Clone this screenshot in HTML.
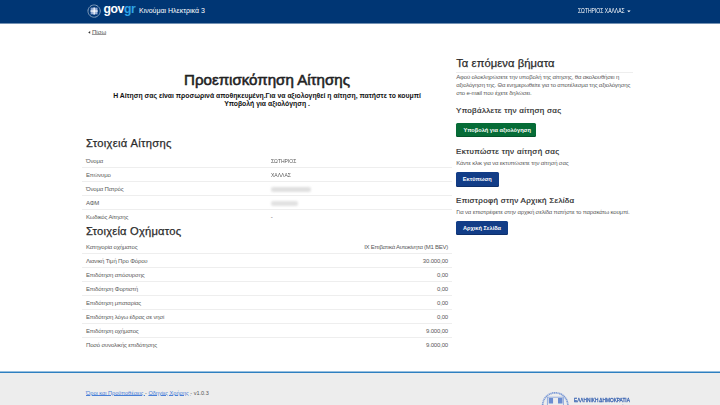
<!DOCTYPE html>
<html><head><meta charset="utf-8">
<style>
html,body{margin:0;padding:0;width:720px;height:405px;overflow:hidden;background:#fff;}
body{position:relative;font-family:"Liberation Sans",sans-serif;}
.a{position:absolute;white-space:nowrap;}
.ln{position:absolute;height:1px;background:#eeeeee;}
.btn{position:absolute;border-radius:1.5px;box-shadow:inset 0 -1px 0 rgba(0,0,0,0.22);}
</style></head><body>
<div style="position:absolute;left:0;top:0;width:720px;height:23px;background:#003674"></div>
<div style="position:absolute;left:0;top:23px;width:720px;height:1px;background:#003674;opacity:0.55"></div>
<svg class="a" style="left:84px;top:2px;width:20px;height:20px" viewBox="0 0 20 20">
  <circle cx="10.1" cy="9.1" r="6.1" fill="none" stroke="#fff" stroke-opacity="0.8" stroke-width="0.9" stroke-dasharray="0.9 0.35"/>
  <rect x="6.5" y="5.5" width="7.2" height="7.1" rx="0.4" fill="#6482b8"/>
  <rect x="7.2" y="6.2" width="2.4" height="2.3" fill="#9bb2d8"/><rect x="10.7" y="6.2" width="2.4" height="2.3" fill="#9bb2d8"/>
  <rect x="7.2" y="9.7" width="2.4" height="2.3" fill="#9bb2d8"/><rect x="10.7" y="9.7" width="2.4" height="2.3" fill="#9bb2d8"/>
  <rect x="9.5" y="5.5" width="1.3" height="7.1" fill="#fff"/>
  <rect x="6.5" y="8.4" width="7.2" height="1.3" fill="#fff"/>
</svg>
<div class="a" style="left:103.60px;top:1px;font-size:12.2px;line-height:16px;color:#fff;font-weight:700;letter-spacing:-0.45px;">gov<span style="color:#2fa3e6">gr</span></div>
<div class="a" style="left:139.00px;top:6px;font-size:7px;line-height:9px;color:#fff;">Κινούμαι Ηλεκτρικά 3</div>
<div class="a" style="left:577.60px;top:7px;font-size:6.3px;line-height:8px;color:#fff;transform:scaleX(0.8);transform-origin:0 0;">ΣΩΤΗΡΙΟΣ ΧΑΛΛΑΣ</div>
<svg class="a" style="left:626.8px;top:10px;width:4px;height:3px" viewBox="0 0 4 3"><path d="M0.2 0.4 L3.6 0.4 L1.9 2.2 Z" fill="#fff"/></svg>
<svg class="a" style="left:87.8px;top:30.6px;width:3px;height:3px" viewBox="0 0 3 3"><path d="M2.2 0 L2.2 2.8 L0.2 1.4 Z" fill="#333"/></svg>
<div class="a" style="left:91.90px;top:28px;font-size:6.1px;line-height:8px;color:#555;text-decoration:underline;text-decoration-color:#999;text-decoration-thickness:0.5px;text-underline-offset:0px;">Πίσω</div>
<div class="a" style="left:88.00px;top:70px;font-size:15.1px;line-height:19px;color:#222;text-align:center;width:358px;-webkit-text-stroke:0.55px #222;">Προεπισκόπηση Αίτησης</div>
<div class="a" style="left:88.00px;top:91px;font-size:6.85px;line-height:9px;color:#111;font-weight:700;text-align:center;width:358px;">Η Αίτηση σας είναι προσωρινά αποθηκευμένη.Για να αξιολογηθεί η αίτηση, πατήστε το κουμπί</div>
<div class="a" style="left:88.00px;top:99px;font-size:6.85px;line-height:9px;color:#111;font-weight:700;text-align:center;width:358px;">Υποβολή για αξιολόγηση .</div>
<div class="a" style="left:86.00px;top:136px;font-size:11.2px;line-height:14px;color:#2b2b2b;-webkit-text-stroke:0.25px #2b2b2b;letter-spacing:0.31px;">Στοιχειά Αίτησης</div>
<div class="a" style="left:86.00px;top:157px;font-size:6px;line-height:8px;color:#595959;letter-spacing:-0.17px;">Όνομα</div>
<div class="a" style="left:270.70px;top:157px;font-size:6px;line-height:8px;color:#595959;transform:scaleX(0.84);transform-origin:0 0;">ΣΩΤΗΡΙΟΣ</div>
<div class="ln" style="left:82px;top:167px;width:370px"></div>
<div class="a" style="left:86.00px;top:171px;font-size:6px;line-height:8px;color:#595959;letter-spacing:-0.17px;">Επώνυμο</div>
<div class="a" style="left:270.70px;top:171px;font-size:6px;line-height:8px;color:#595959;transform:scaleX(0.84);transform-origin:0 0;">ΧΑΛΛΑΣ</div>
<div class="ln" style="left:82px;top:181px;width:370px"></div>
<div class="a" style="left:86.00px;top:185px;font-size:6px;line-height:8px;color:#595959;letter-spacing:-0.17px;">Όνομα Πατρός</div>
<div class="a" style="left:271px;top:186.80px;width:40px;height:5px;background:#e0e0e0;filter:blur(1.2px);border-radius:2px"></div>
<div class="ln" style="left:82px;top:195px;width:370px"></div>
<div class="a" style="left:86.00px;top:199px;font-size:6px;line-height:8px;color:#595959;letter-spacing:-0.17px;">ΑΦΜ</div>
<div class="a" style="left:271px;top:200.80px;width:27px;height:5px;background:#e2e2e2;filter:blur(1.2px);border-radius:2px"></div>
<div class="ln" style="left:82px;top:209px;width:370px"></div>
<div class="a" style="left:86.00px;top:213px;font-size:6px;line-height:8px;color:#595959;letter-spacing:-0.17px;">Κωδικός Αίτησης</div>
<div class="a" style="left:270.70px;top:213px;font-size:6px;line-height:8px;color:#595959;letter-spacing:-0.17px;">-</div>
<div class="a" style="left:86.00px;top:224px;font-size:11.2px;line-height:14px;color:#2b2b2b;-webkit-text-stroke:0.25px #2b2b2b;letter-spacing:0.2px;">Στοιχεία Οχήματος</div>
<div class="a" style="left:86.00px;top:243px;font-size:6px;line-height:8px;color:#595959;letter-spacing:-0.17px;">Κατηγορία οχήματος</div>
<div class="a" style="left:248.00px;top:243px;font-size:6px;line-height:8px;color:#595959;text-align:right;width:200px;letter-spacing:-0.26px;">ΙΧ Επιβατικά Αυτοκίνητα (Μ1 BEV)</div>
<div class="ln" style="left:82px;top:253px;width:370px"></div>
<div class="a" style="left:86.00px;top:257px;font-size:6px;line-height:8px;color:#595959;letter-spacing:-0.17px;">Λιανική Τιμή Προ Φόρου</div>
<div class="a" style="left:248.00px;top:257px;font-size:6px;line-height:8px;color:#595959;text-align:right;width:200px;letter-spacing:-0.17px;">30.000,00</div>
<div class="ln" style="left:82px;top:267px;width:370px"></div>
<div class="a" style="left:86.00px;top:271px;font-size:6px;line-height:8px;color:#595959;letter-spacing:-0.17px;">Επιδότηση απόσυρσης</div>
<div class="a" style="left:248.00px;top:271px;font-size:6px;line-height:8px;color:#595959;text-align:right;width:200px;letter-spacing:-0.17px;">0,00</div>
<div class="ln" style="left:82px;top:281px;width:370px"></div>
<div class="a" style="left:86.00px;top:285px;font-size:6px;line-height:8px;color:#595959;letter-spacing:-0.17px;">Επιδότηση Φορτιστή</div>
<div class="a" style="left:248.00px;top:285px;font-size:6px;line-height:8px;color:#595959;text-align:right;width:200px;letter-spacing:-0.17px;">0,00</div>
<div class="ln" style="left:82px;top:295px;width:370px"></div>
<div class="a" style="left:86.00px;top:299px;font-size:6px;line-height:8px;color:#595959;letter-spacing:-0.17px;">Επιδότηση μπαταρίας</div>
<div class="a" style="left:248.00px;top:299px;font-size:6px;line-height:8px;color:#595959;text-align:right;width:200px;letter-spacing:-0.17px;">0,00</div>
<div class="ln" style="left:82px;top:309px;width:370px"></div>
<div class="a" style="left:86.00px;top:313px;font-size:6px;line-height:8px;color:#595959;letter-spacing:-0.17px;">Επιδότηση λόγω έδρας σε νησί</div>
<div class="a" style="left:248.00px;top:313px;font-size:6px;line-height:8px;color:#595959;text-align:right;width:200px;letter-spacing:-0.17px;">0,00</div>
<div class="ln" style="left:82px;top:323px;width:370px"></div>
<div class="a" style="left:86.00px;top:327px;font-size:6px;line-height:8px;color:#595959;letter-spacing:-0.17px;">Επιδότηση οχήματος</div>
<div class="a" style="left:248.00px;top:327px;font-size:6px;line-height:8px;color:#595959;text-align:right;width:200px;letter-spacing:-0.17px;">9.000,00</div>
<div class="ln" style="left:82px;top:337px;width:370px"></div>
<div class="a" style="left:86.00px;top:341px;font-size:6px;line-height:8px;color:#595959;letter-spacing:-0.17px;">Ποσό συνολικής επιδότησης</div>
<div class="a" style="left:248.00px;top:341px;font-size:6px;line-height:8px;color:#595959;text-align:right;width:200px;letter-spacing:-0.17px;">9.000,00</div>
<div class="a" style="left:456.20px;top:56px;font-size:11.2px;line-height:14px;color:#2b2b2b;-webkit-text-stroke:0.25px #2b2b2b;letter-spacing:0.08px;">Τα επόμενα βήματα</div>
<div class="ln" style="left:456px;top:72.1px;width:177px"></div>
<div class="a" style="left:456.20px;top:73px;font-size:6px;line-height:8px;color:#595959;letter-spacing:-0.17px;">Αφού ολοκληρώσετε την υποβολή της αίτησης, θα ακολουθήσει η</div>
<div class="a" style="left:456.20px;top:81px;font-size:6px;line-height:8px;color:#595959;letter-spacing:-0.17px;">αξιολόγηση της. Θα ενημερωθείτε για το αποτέλεσμα της αξιολόγησης</div>
<div class="a" style="left:456.20px;top:89px;font-size:6px;line-height:8px;color:#595959;letter-spacing:-0.17px;">στο e-mail που έχετε δηλώσει.</div>
<div class="a" style="left:456.00px;top:106px;font-size:8px;line-height:10px;color:#2b2b2b;-webkit-text-stroke:0.2px #2b2b2b;letter-spacing:0.3px;">Υποβάλλετε την αίτηση σας</div>
<div class="btn" style="left:455.8px;top:123px;width:80.3px;height:14.4px;background:#066c37"></div>
<div class="a" style="left:463.40px;top:126px;font-size:5.65px;line-height:8px;color:#fff;font-weight:700;">Υποβολή για αξιολόγηση</div>
<div class="a" style="left:456.00px;top:147px;font-size:8px;line-height:10px;color:#2b2b2b;-webkit-text-stroke:0.2px #2b2b2b;letter-spacing:0.34px;">Εκτυπώστε την αίτησή σας</div>
<div class="a" style="left:456.20px;top:159px;font-size:6px;line-height:8px;color:#595959;letter-spacing:-0.17px;">Κάντε κλικ για να εκτυπώσετε την αίτησή σας</div>
<div class="btn" style="left:455.8px;top:172.2px;width:43px;height:14.5px;background:#123d87"></div>
<div class="a" style="left:462.80px;top:175px;font-size:5.65px;line-height:8px;color:#fff;font-weight:700;">Εκτύπωση</div>
<div class="a" style="left:456.00px;top:196px;font-size:8px;line-height:10px;color:#2b2b2b;-webkit-text-stroke:0.2px #2b2b2b;letter-spacing:0.31px;">Επιστροφή στην Αρχική Σελίδα</div>
<div class="a" style="left:456.20px;top:208px;font-size:6px;line-height:8px;color:#595959;letter-spacing:-0.17px;">Για να επιστρέφετε στην αρχική σελίδα πατήστε το παρακάτω κουμπί.</div>
<div class="btn" style="left:455.9px;top:221.1px;width:52.1px;height:14.4px;background:#123d87"></div>
<div class="a" style="left:462.90px;top:224px;font-size:5.65px;line-height:8px;color:#fff;font-weight:700;">Αρχική Σελίδα</div>
<div style="position:absolute;left:0;top:373px;width:720px;height:32px;background:#ededed"></div>
<div style="position:absolute;left:0;top:371px;width:720px;height:1px;background:#2e7fc0;opacity:0.5"></div>
<div style="position:absolute;left:0;top:372px;width:720px;height:1px;background:#2e7fc0"></div>
<div class="a" style="left:86.00px;top:390px;font-size:5.55px;line-height:7px;color:#555;"><span style="color:#4a80d8;text-decoration:underline;text-decoration-thickness:0.5px;text-underline-offset:0.3px">Όροι και Προϋποθέσεις </span> - <span style="color:#4a80d8;text-decoration:underline;text-decoration-thickness:0.5px;text-underline-offset:0.3px">Οδηγίες Χρήσης </span> - v1.0.3</div>
<svg class="a" style="left:538px;top:388px;width:36px;height:17px" viewBox="0 0 36 17">
  <circle cx="17.25" cy="17.4" r="12.6" fill="none" stroke="#7d9bd6" stroke-width="1.7" stroke-dasharray="1.3 0.5"/>
  <rect x="9.4" y="9.2" width="16" height="12" fill="none" stroke="#8ea8dc" stroke-width="0.9"/>
  <rect x="10.75" y="10" width="4.3" height="5.5" fill="#6b8dd1"/>
  <rect x="20" y="10" width="4.5" height="5.5" fill="#6b8dd1"/>
</svg>
<div class="a" style="left:574.20px;top:396px;font-size:6.1px;line-height:8px;color:#3560b0;-webkit-text-stroke:0.3px #3560b0;transform:scaleX(0.78);transform-origin:0 0;">ΕΛΛΗΝΙΚΗ ΔΗΜΟΚΡΑΤΙΑ</div>
<div class="a" style="left:574.20px;top:403px;font-size:6.1px;line-height:8px;color:#3560b0;transform:scaleX(0.85);transform-origin:0 0;">Υπουργείο Μεταφορών</div>
</body></html>
